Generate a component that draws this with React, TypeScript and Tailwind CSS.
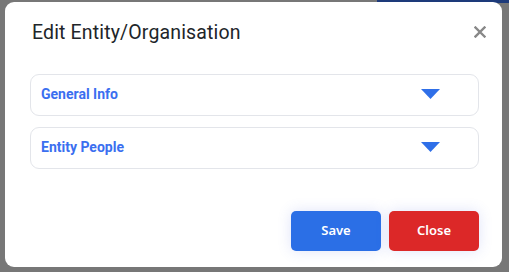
export default function App() {
  return (
    <div className="w-[509px] h-[272px] bg-[#777777] relative overflow-hidden" style={{ fontFamily: "Roboto, 'Noto Sans', sans-serif" }}>
      <div className="absolute left-[377px] top-0 w-[132px] h-[3px] bg-[#1d3a7a]" />
      <div className="absolute left-[5px] top-[2px] w-[497px] h-[265px] bg-white rounded-[9px] flex flex-col">
        <div className="flex items-center justify-between pl-[27px] pr-[16px] h-[62px]">
          <h2 className="text-[19.5px] text-[#212529] leading-none tracking-[0.15px]">Edit Entity/Organisation</h2>
          <svg width="12" height="12" viewBox="0 0 12 12" className="mt-[-2px]">
            <path d="M1.5 1.5 L10.5 10.5 M10.5 1.5 L1.5 10.5" stroke="#888" strokeWidth="2.4" strokeLinecap="square" />
          </svg>
        </div>
        <div className="flex flex-col gap-[11px] pl-[25px] pr-[23px] mt-[10px]">
          {["General Info", "Entity People"].map((t) => (
            <div key={t} className="h-[42px] border border-[#e3e5ea] rounded-[9px] flex items-center justify-between pl-[10px] pr-[38px]">
              <span className="text-[14px] font-bold text-[#3b6ff0] leading-none mt-[-2px]">{t}</span>
              <svg width="19" height="10" viewBox="0 0 19 10" className="mt-[-2px]">
                <path d="M0 0 H19 L9.5 10 Z" fill="#2f6fe8" />
              </svg>
            </div>
          ))}
        </div>
        <div className="flex justify-end gap-[8px] px-[23px] mt-[42px]">
          <button className="w-[90px] h-[40px] rounded-[5px] bg-[#2b6fe6] text-white text-[13px] font-semibold shadow-[0_0_14px_rgba(80,100,220,0.18)]" style={{ fontFamily: "'Noto Sans', sans-serif" }}>Save</button>
          <button className="w-[90px] h-[40px] rounded-[5px] bg-[#dc2828] text-white text-[13px] font-semibold shadow-[0_0_14px_rgba(80,100,220,0.18)]" style={{ fontFamily: "'Noto Sans', sans-serif" }}>Close</button>
        </div>
      </div>
    </div>
  );
}
